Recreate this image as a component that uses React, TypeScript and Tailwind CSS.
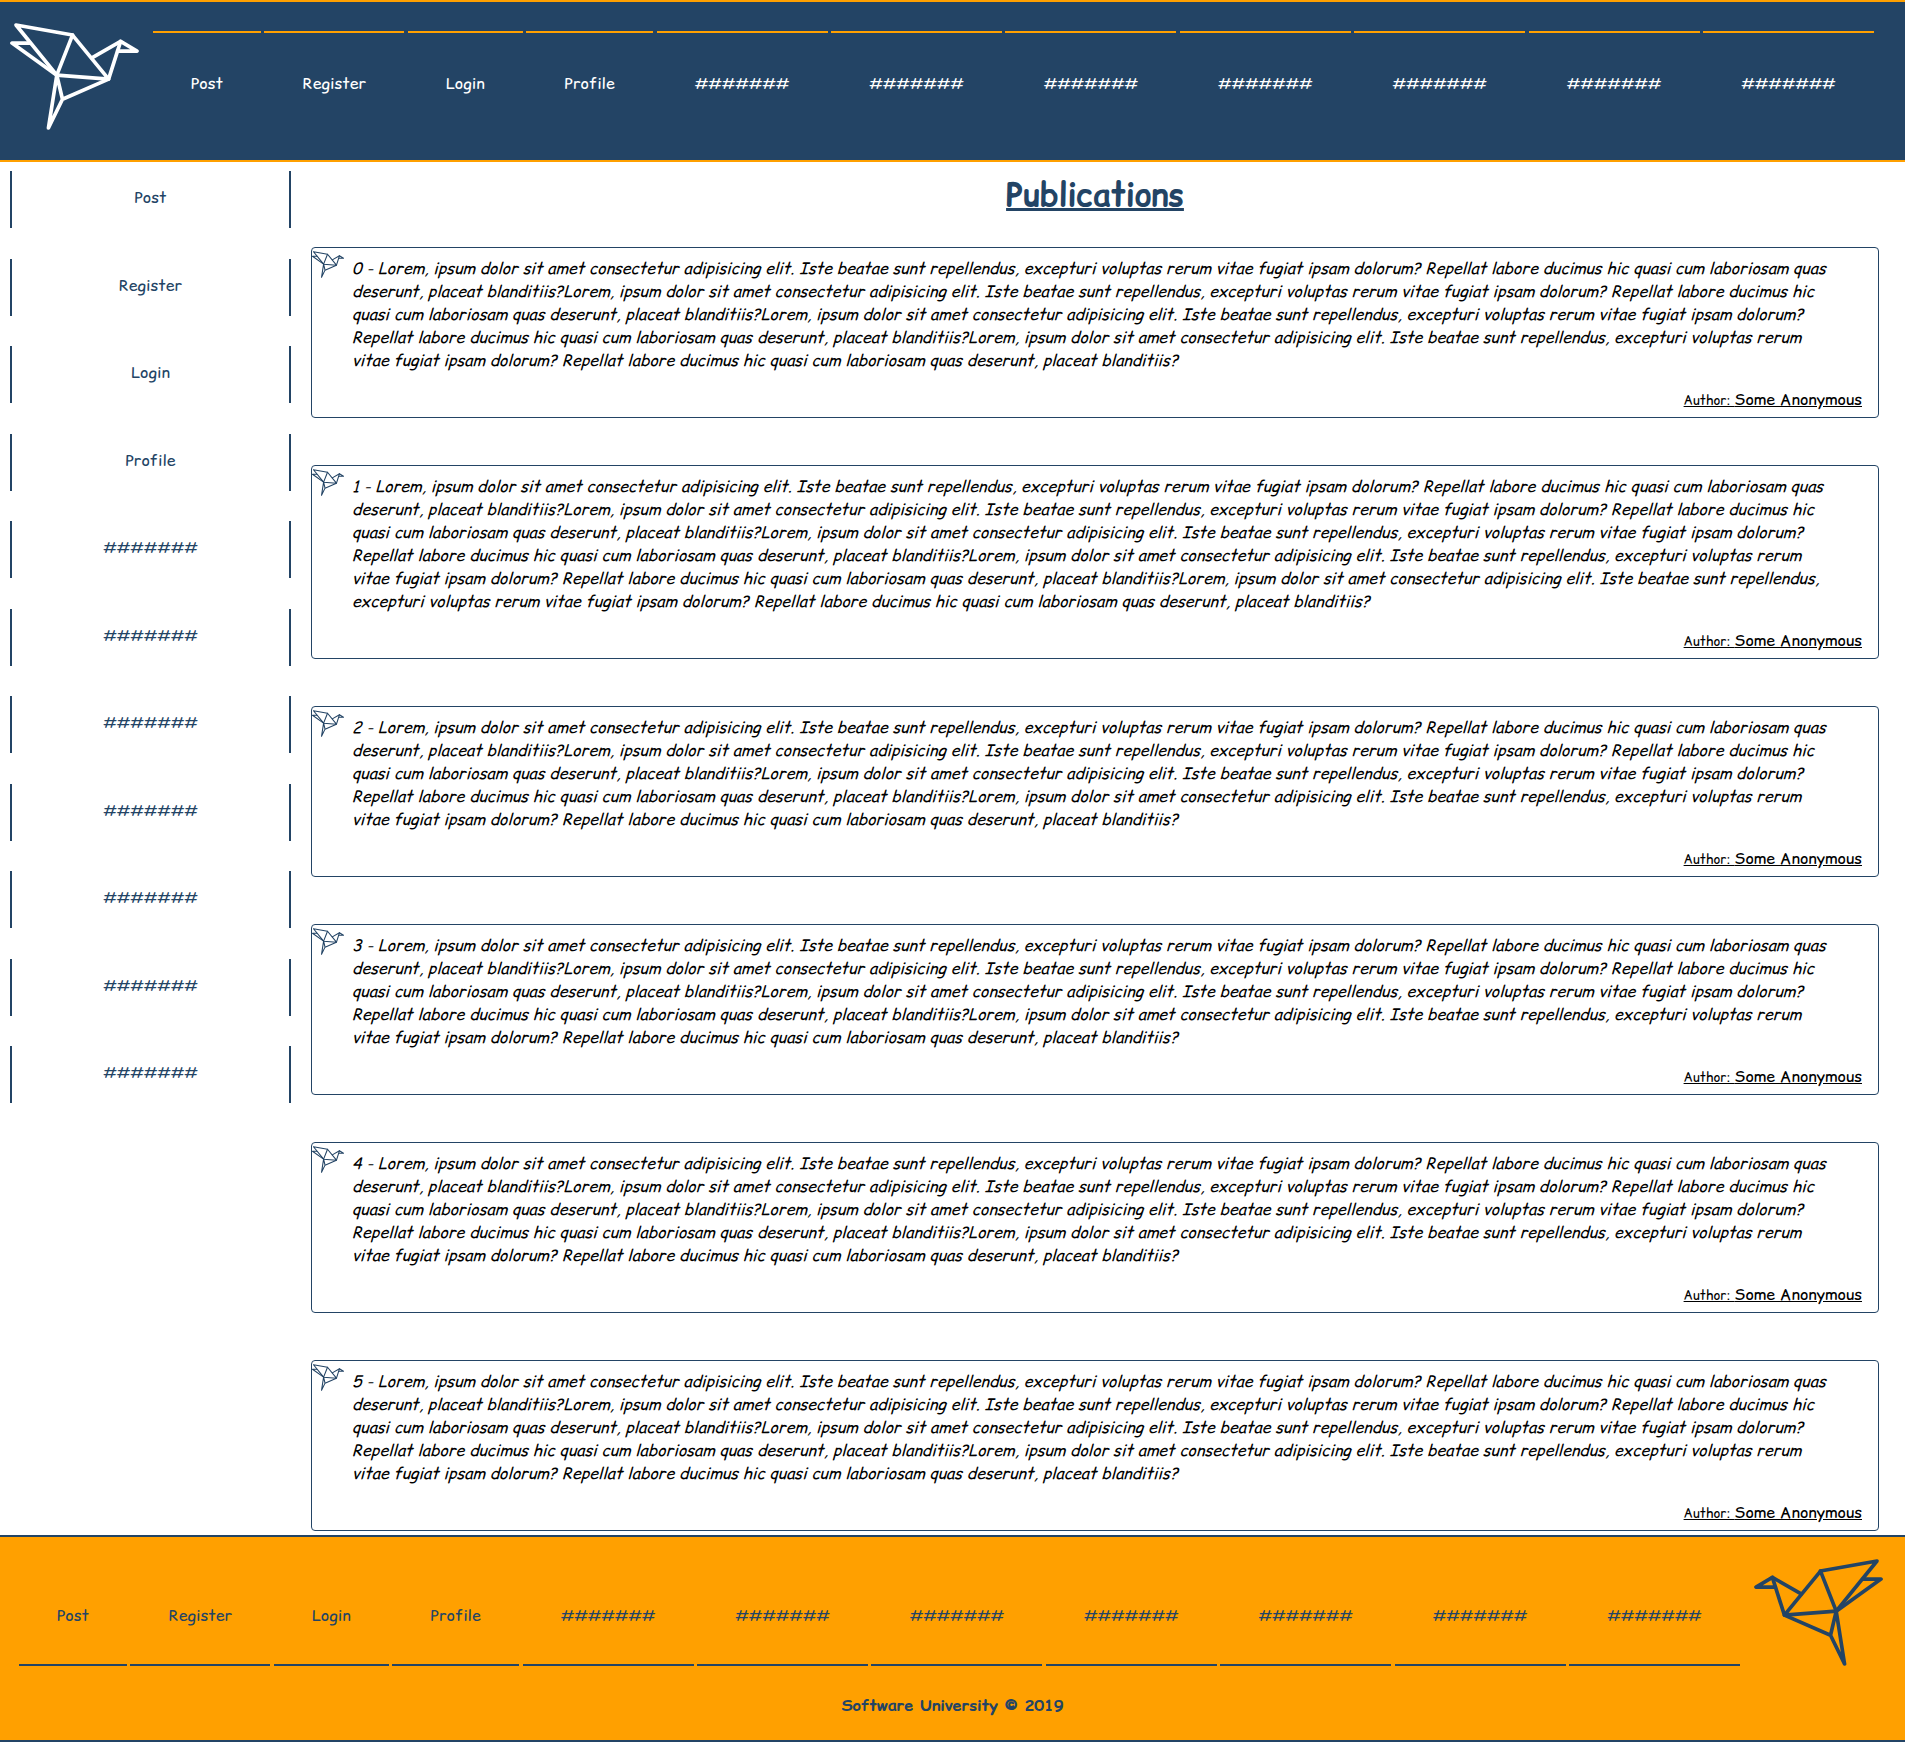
const HASH = '#######';

const links = [
  { label: 'Post', width: 'w-[108px]' },
  { label: 'Register', width: 'w-[140px]' },
  { label: 'Login', width: 'w-[115px]' },
  { label: 'Profile', width: 'w-[127px]' },
  ...Array.from({ length: 7 }, () => ({ label: HASH, width: 'w-[171px]' })),
];

const LOREM =
  'Lorem, ipsum dolor sit amet consectetur adipisicing elit. Iste beatae sunt repellendus, excepturi voluptas rerum vitae fugiat ipsam dolorum? Repellat labore ducimus hic quasi cum laboriosam quas deserunt, placeat blanditiis?';

const posts = [4, 5, 4, 4, 4, 4].map((repeats, id) => ({
  id,
  text: `${id} - ${LOREM.repeat(repeats)}`,
}));

function Bird({ className, strokeWidth }: { className: string; strokeWidth: number }) {
  return (
    <svg
      viewBox="32 71 386 320"
      className={className}
      fill="none"
      stroke="currentColor"
      strokeWidth={strokeWidth}
      strokeLinecap="round"
      strokeLinejoin="round"
      aria-hidden="true"
    >
      <path d="M50 77 219 107 327 239 172 227Z" />
      <path d="M219 107 172 227 38 131H92" />
      <path d="M277 175 363 126 412 155H354" />
      <path d="M363 126 327 239 189 299 172 227 147 385 189 299" />
    </svg>
  );
}

function Header() {
  return (
    <header className="flex h-[162px] items-start border-y-2 border-[#ffa000] bg-[#234465] text-white">
      <a href="#" aria-label="Home" className="ml-[10px] mr-[14px] mt-[21px] block shrink-0">
        <Bird className="h-[107px] w-[129px]" strokeWidth={11} />
      </a>
      <nav className="mr-[31px] mt-[29px] flex-1">
        <ul className="flex justify-between">
          {links.map((link, i) => (
            <li key={i} className={link.width}>
              <a href="#" className="block border-t-2 border-[#ffa000] pt-[39px] text-center">
                {link.label}
              </a>
            </li>
          ))}
        </ul>
      </nav>
    </header>
  );
}

function Sidebar() {
  return (
    <aside className="ml-[10px] mt-[9px] w-[281px] shrink-0 text-[#234465]">
      <ul className="flex min-h-[932px] flex-col justify-between">
        {links.map((link, i) => (
          <li key={i}>
            <a href="#" className="block border-x-2 border-[#234465] pb-[19px] pt-[15px] text-center">
              {link.label}
            </a>
          </li>
        ))}
      </ul>
    </aside>
  );
}

function Post({ text }: { text: string }) {
  return (
    <article className="relative rounded border border-[#234465] pb-[6px] pl-10 pt-[9px] text-black">
      <Bird className="absolute left-0 top-[3px] h-[27px] w-8 text-[#234465]" strokeWidth={13} />
      <p className="pr-10 italic">{text}</p>
      <p className="mt-4 pr-4 text-right">
        <a href="#" className="underline">
          <span className="text-[13px] leading-4">Author: </span>
          <span>Some Anonymous</span>
        </a>
      </p>
    </article>
  );
}

function Footer() {
  return (
    <footer className="border-y-2 border-[#234465] bg-[#ffa000] text-[#234465]">
      <div className="flex items-start">
        <nav className="ml-[19px] mr-[14px] mt-[28px] flex-1">
          <ul className="flex justify-between">
            {links.map((link, i) => (
              <li key={i} className={link.width}>
                <a href="#" className="block border-b-2 border-[#234465] pb-[37px] pt-[39px] text-center">
                  {link.label}
                </a>
              </li>
            ))}
          </ul>
        </nav>
        <a href="#" aria-label="Home" className="mr-[22px] mt-[22px] block shrink-0">
          <Bird className="h-[107px] w-[129px] -scale-x-100" strokeWidth={11} />
        </a>
      </div>
      <p className="pb-[23px] pt-[28px] text-center font-bold">Software University © 2019</p>
    </footer>
  );
}

export default function App() {
  return (
    <div className="bg-white font-['Comic_Relief','Comic_Sans_MS',cursive] text-base leading-[23px]">
      <Header />
      <div className="flex items-start">
        <Sidebar />
        <main className="ml-5 mr-[26px] min-w-0 flex-1 pb-1 pt-[10px]">
          <h1 className="mb-[30px] text-center text-[32px] font-bold leading-[45px] text-[#234465] underline decoration-[3px]">
            Publications
          </h1>
          <div className="flex flex-col gap-[47px]">
            {posts.map((post) => (
              <Post key={post.id} text={post.text} />
            ))}
          </div>
        </main>
      </div>
      <Footer />
    </div>
  );
}
